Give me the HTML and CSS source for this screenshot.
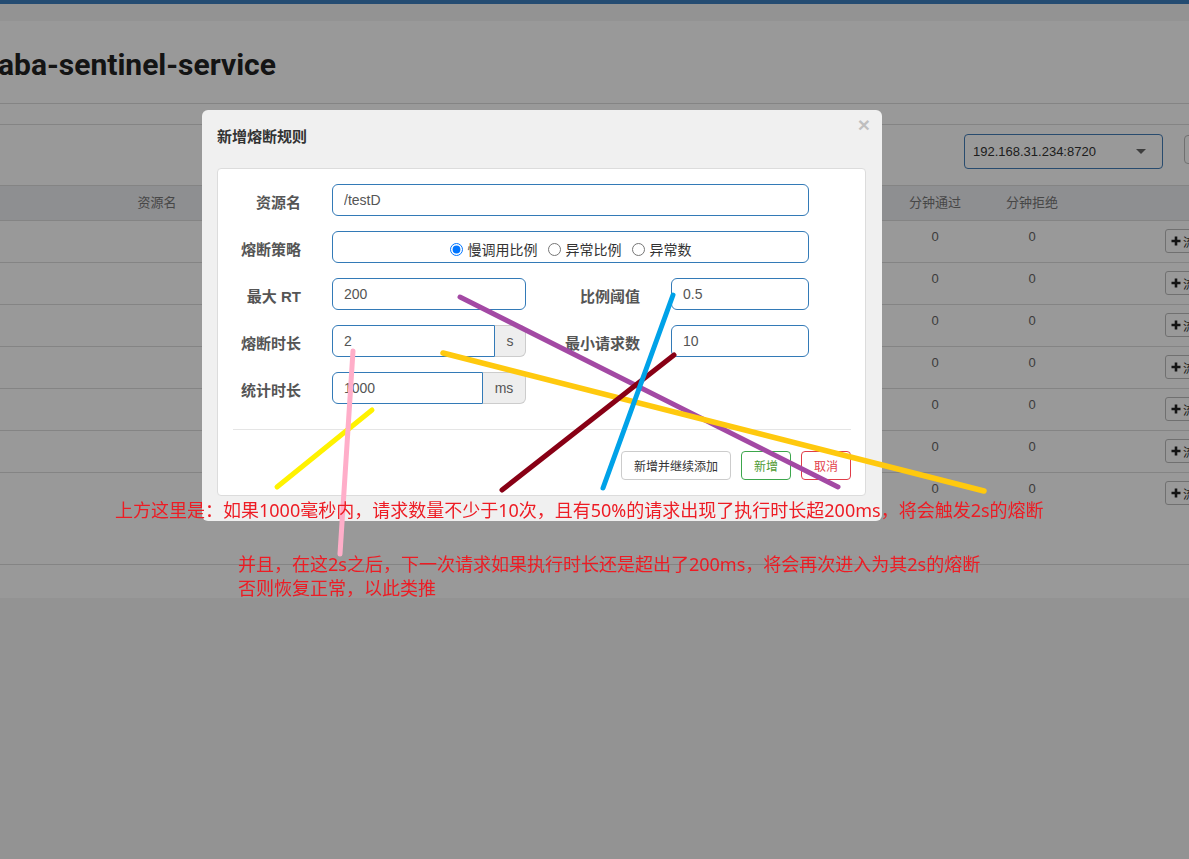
FILE: index.html
```html
<!DOCTYPE html>
<html lang="zh-CN">
<head>
<meta charset="utf-8">
<title>新增熔断规则</title>
<link rel="stylesheet" href="styles.css">
</head>
<body>
<div class="page">
  <div class="topbar"></div>
  <div class="strip"></div>
  <main class="content">
    <header class="page-head"><h1 class="page-title">aba-sentinel-service</h1></header>
    <div class="toolbar">
      <div class="select"><span>192.168.31.234:8720</span><span class="caret"></span></div>
      <button class="tool-btn">刷新</button>
    </div>
    <div class="table">
      <div class="tr th">
        <div class="cell">资源名</div><div class="cell"></div><div class="cell">分钟通过</div><div class="cell">分钟拒绝</div><div class="cell"></div>
      </div>
      <div class="tr"><div class="cell"></div><div class="cell"></div><div class="cell">0</div><div class="cell">0</div><div class="cell ops"><button class="row-btn"><svg class="plus" viewBox="0 0 10 10"><path d="M5 0.5V9.5M0.5 5H9.5"/></svg>流控</button></div></div>
      <div class="tr"><div class="cell"></div><div class="cell"></div><div class="cell">0</div><div class="cell">0</div><div class="cell ops"><button class="row-btn"><svg class="plus" viewBox="0 0 10 10"><path d="M5 0.5V9.5M0.5 5H9.5"/></svg>流控</button></div></div>
      <div class="tr"><div class="cell"></div><div class="cell"></div><div class="cell">0</div><div class="cell">0</div><div class="cell ops"><button class="row-btn"><svg class="plus" viewBox="0 0 10 10"><path d="M5 0.5V9.5M0.5 5H9.5"/></svg>流控</button></div></div>
      <div class="tr"><div class="cell"></div><div class="cell"></div><div class="cell">0</div><div class="cell">0</div><div class="cell ops"><button class="row-btn"><svg class="plus" viewBox="0 0 10 10"><path d="M5 0.5V9.5M0.5 5H9.5"/></svg>流控</button></div></div>
      <div class="tr"><div class="cell"></div><div class="cell"></div><div class="cell">0</div><div class="cell">0</div><div class="cell ops"><button class="row-btn"><svg class="plus" viewBox="0 0 10 10"><path d="M5 0.5V9.5M0.5 5H9.5"/></svg>流控</button></div></div>
      <div class="tr"><div class="cell"></div><div class="cell"></div><div class="cell">0</div><div class="cell">0</div><div class="cell ops"><button class="row-btn"><svg class="plus" viewBox="0 0 10 10"><path d="M5 0.5V9.5M0.5 5H9.5"/></svg>流控</button></div></div>
      <div class="tr"><div class="cell"></div><div class="cell"></div><div class="cell">0</div><div class="cell">0</div><div class="cell ops"><button class="row-btn"><svg class="plus" viewBox="0 0 10 10"><path d="M5 0.5V9.5M0.5 5H9.5"/></svg>流控</button></div></div>
    </div>
    <div class="footer"></div>
  </main>
</div>

<div class="backdrop"></div>

<div class="modal">
  <div class="modal-head">
    <h4 class="modal-title">新增熔断规则</h4>
    <span class="close">×</span>
  </div>
  <div class="modal-body">
    <div class="card">
      <form class="form">
        <label class="lbl">资源名</label>
        <div class="field span3"><input class="inp" value="/testD"></div>

        <label class="lbl">熔断策略</label>
        <div class="field span3 radio-box">
          <label class="radio"><input type="radio" name="grade" checked>慢调用比例</label>
          <label class="radio"><input type="radio" name="grade">异常比例</label>
          <label class="radio"><input type="radio" name="grade">异常数</label>
        </div>

        <label class="lbl">最大 RT</label>
        <div class="field"><input class="inp" value="200"></div>
        <label class="lbl">比例阈值</label>
        <div class="field"><input class="inp" value="0.5"></div>

        <label class="lbl">熔断时长</label>
        <div class="field group"><input class="inp" value="2"><span class="addon addon-s">s</span></div>
        <label class="lbl">最小请求数</label>
        <div class="field"><input class="inp" value="10"></div>

        <label class="lbl">统计时长</label>
        <div class="field group"><input class="inp" value="1000"><span class="addon addon-ms">ms</span></div>
      </form>
      <div class="sep"></div>
      <div class="actions">
        <button class="btn">新增并继续添加</button>
        <button class="btn btn-ok">新增</button>
        <button class="btn btn-cancel">取消</button>
      </div>
    </div>
  </div>
</div>

<div class="annot">
  <svg class="marks" width="1189" height="859" viewBox="0 0 1189 859">
    <line x1="277" y1="487" x2="372" y2="410" stroke="#fff200" stroke-width="5"/>
    <line x1="353" y1="351" x2="340" y2="554" stroke="#ffaec9" stroke-width="5"/>
    <line x1="460" y1="297" x2="838" y2="487" stroke="#a349a4" stroke-width="5"/>
    <line x1="443" y1="353" x2="984" y2="491" stroke="#ffc90e" stroke-width="5.5"/>
    <line x1="674" y1="355" x2="502" y2="490" stroke="#880015" stroke-width="5"/>
    <line x1="673" y1="295" x2="603" y2="488" stroke="#00a2e8" stroke-width="5"/>
  </svg>
  <p class="note note-1">上方这里是：如果1000毫秒内，请求数量不少于10次，且有50%的请求出现了执行时长超200ms，将会触发2s的熔断</p>
  <p class="note note-2">并且，在这2s之后，下一次请求如果执行时长还是超出了200ms，将会再次进入为其2s的熔断<br>否则恢复正常，以此类推</p>
</div>
</body>
</html>
```

FILE: styles.css
```css
html, body {
  margin: 0;
  padding: 0;
  overflow: hidden;
}

body {
  background: #f5f5f5;
  font-family: "Liberation Sans", "Noto Sans CJK SC", sans-serif;
  font-size: 13px;
  color: #333;
  width: 1189px;
  height: 859px;
}

.page {
  width: 1260px;
}

.topbar {
  height: 4px;
  background: #3d7fbf;
}

.strip {
  height: 17px;
}

.content {
  background: #fff;
}

.page-head {
  height: 82px;
  border-bottom: 1px solid #dcdcdc;
  margin-bottom: 20px;
}

.page-title {
  margin: 0;
  padding-top: 24px;
  font-family: Roboto, "Liberation Sans", sans-serif;
  font-weight: 700;
  font-size: 30px;
  line-height: 40px;
  color: #222;
  text-indent: -2px;
}

.toolbar {
  height: 61px;
  box-sizing: border-box;
  border-top: 1px solid #dcdcdc;
  display: flex;
  justify-content: flex-end;
  align-items: flex-start;
  gap: 21px;
  padding: 9px 16px 0 0;
}

.select {
  width: 199px;
  height: 35px;
  box-sizing: border-box;
  border: 1px solid #437db7;
  border-radius: 4px;
  display: flex;
  align-items: center;
  justify-content: space-between;
  padding: 0 16px 0 8px;
  font-size: 13px;
  color: #333;
}

.caret {
  width: 0;
  height: 0;
  border-left: 5px solid transparent;
  border-right: 5px solid transparent;
  border-top: 5px solid #666;
}

.tool-btn {
  margin-top: 1px;
  width: 60px;
  height: 29px;
  border: 1px solid #bbb;
  border-radius: 4px;
  background: #fff;
  font: inherit;
  color: #333;
  padding: 0;
}

.table {
  font-size: 13px;
}

.tr {
  display: grid;
  grid-template-columns: 314px 574px 94px 100px 178px;
  height: 41px;
  border-bottom: 1px solid #dcdcdc;
  color: #666;
}

.tr:last-child {
  border-bottom: 0;
}

.tr.th {
  height: 34px;
  border-top: 1px solid #dcdcdc;
  background: #edeef2;
  color: #777;
}

.cell {
  text-align: center;
  line-height: 18px;
  padding-top: 7px;
}

.th .cell {
  line-height: 34px;
  padding-top: 0;
}

.cell.ops {
  text-align: left;
  padding: 8px 0 0 83px;
}

.row-btn {
  height: 24px;
  width: 62px;
  border: 1px solid #bbb;
  border-radius: 3px;
  background: #fff;
  display: flex;
  align-items: center;
  gap: 2px;
  padding: 0 0 0 5px;
  font-size: 12px;
  color: #333;
  font-family: "Liberation Sans", "Noto Sans CJK SC", sans-serif;
}

.plus {
  width: 10px;
  height: 10px;
  fill: none;
  stroke: #222;
  stroke-width: 2.6;
}

.footer {
  margin-top: 50px;
  border-top: 1px solid #dcdcdc;
  height: 33px;
}

.backdrop {
  position: fixed;
  inset: 0;
  background: rgba(0, 0, 0, 0.4);
  z-index: 10;
}

.modal {
  position: absolute;
  left: 202px;
  top: 110px;
  width: 680px;
  background: #f0f0f0;
  border-radius: 6px;
  z-index: 11;
  display: flex;
  flex-direction: column;
}

.modal-head {
  height: 58px;
  box-sizing: border-box;
  padding: 17px 0 0 15px;
}

.modal-title {
  margin: 0;
  font-size: 15px;
  line-height: 20px;
  font-weight: 700;
  color: #333;
}

.close {
  position: absolute;
  top: 4px;
  right: 12px;
  font-size: 21px;
  font-weight: 700;
  line-height: 21px;
  color: #000;
  opacity: 0.2;
}

.modal-body {
  padding: 0 16px 25px 15px;
}

.card {
  background: #fff;
  border: 1px solid #dcdcdc;
  border-radius: 4px;
  padding-top: 15px;
}

.form {
  display: grid;
  grid-template-columns: 83px 194px 83px 138px;
  grid-auto-rows: 32px;
  column-gap: 31px;
  row-gap: 15px;
  margin: 0;
}

.lbl {
  text-align: right;
  font-size: 15px;
  font-weight: 700;
  color: #555;
  line-height: 20px;
  padding-top: 9px;
  white-space: nowrap;
}

.field {
  display: flex;
  min-width: 0;
}

.span3 {
  grid-column: 2 / 5;
}

.inp {
  flex: 1;
  min-width: 0;
  height: 32px;
  box-sizing: border-box;
  border: 1px solid #337ab7;
  border-radius: 6px;
  padding: 0 11px;
  font-family: "Liberation Sans", "Noto Sans CJK SC", sans-serif;
  font-size: 14px;
  color: #555;
  outline: none;
  background: #fff;
}

.group .inp {
  border-radius: 6px 0 0 6px;
}

.addon {
  height: 32px;
  box-sizing: border-box;
  border: 1px solid #ccc;
  border-left: 0;
  border-radius: 0 6px 6px 0;
  background: #eee;
  color: #555;
  font-size: 14px;
  line-height: 30px;
  text-align: center;
}

.addon-s {
  width: 31px;
}

.addon-ms {
  width: 43px;
}

.radio-box {
  box-sizing: border-box;
  height: 32px;
  border: 1px solid #337ab7;
  border-radius: 6px;
  align-items: center;
  justify-content: center;
  gap: 10px;
  padding: 5px 0 0 0;
}

.radio {
  display: flex;
  align-items: center;
  font-size: 14px;
  line-height: 20px;
  color: #333;
}

.radio input {
  width: 13px;
  height: 13px;
  margin: 0 5px 0 0;
}

.sep {
  margin: 25px 14px 0 15px;
  height: 1px;
  background: #e5e5e5;
}

.actions {
  display: flex;
  justify-content: flex-end;
  gap: 10px;
  padding: 21px 14px 15px 0;
}

.btn {
  height: 29px;
  box-sizing: border-box;
  border: 1px solid #ccc;
  border-radius: 4px;
  background: #fff;
  padding: 0 12px;
  font-family: "Liberation Sans", "Noto Sans CJK SC", sans-serif;
  font-size: 12px;
  color: #333;
}

.btn-ok {
  width: 50px;
  padding: 0;
  border-color: #3ca64c;
  color: #4f9a33;
}

.btn-cancel {
  width: 50px;
  padding: 0;
  border-color: #e03c48;
  color: #e23f4c;
}

.annot {
  position: absolute;
  left: 0;
  top: 0;
  width: 1189px;
  height: 859px;
  z-index: 12;
  pointer-events: none;
}

.marks {
  position: absolute;
  left: 0;
  top: 0;
  stroke-linecap: round;
}

.note {
  position: absolute;
  margin: 0;
  font-family: "Noto Sans", "Noto Sans CJK SC", sans-serif;
  font-size: 18px;
  line-height: 24px;
  color: #ed1c24;
  white-space: nowrap;
}

.note-1 {
  left: 115px;
  top: 498px;
}

.note-2 {
  left: 238px;
  top: 552px;
}
```
